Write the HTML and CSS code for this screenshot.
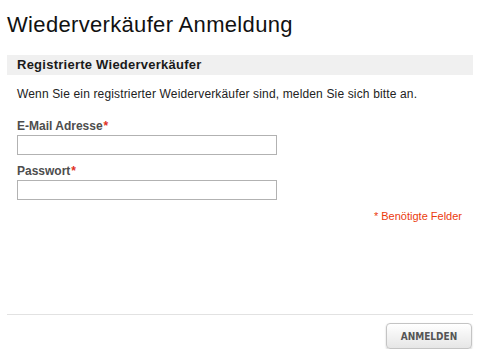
FILE: index.html
```html
<!DOCTYPE html>
<html lang="de">
<head>
  <meta charset="UTF-8">
  <title>Wiederverkäufer Anmeldung</title>
  <link rel="stylesheet" href="styles.css">
</head>
<body>
  <div class="page">
    <h1>Wiederverkäufer Anmeldung</h1>

    <form class="login-form">
      <h2 class="section-title">Registrierte Wiederverkäufer</h2>
      <div class="section-body">
        <p class="intro">Wenn Sie ein registrierter Weiderverkäufer sind, melden Sie sich bitte an.</p>

        <label for="email">E-Mail Adresse<em>*</em></label>
        <input type="text" id="email" name="email">

        <label for="pass">Passwort<em>*</em></label>
        <input type="password" id="pass" name="pass">

        <p class="required">* Benötigte Felder</p>
      </div>

      <div class="buttons">
        <button type="submit">ANMELDEN</button>
      </div>
    </form>
  </div>
</body>
</html>
```

FILE: styles.css
```css
body {
  margin: 0;
  font-family: "Liberation Sans", Arial, sans-serif;
  background: #fff;
  color: #222;
}

.page {
  width: 466px;
  margin-left: 7px;
}

h1 {
  margin: 0;
  padding-top: 12px;
  font-size: 22px;
  line-height: 26px;
  font-weight: normal;
  letter-spacing: 0.33px;
  color: #111;
}

.section-title {
  margin: 17px 0 0;
  height: 20px;
  padding-left: 10px;
  background-color: #f0f0f0;
  font-size: 13px;
  line-height: 20px;
  font-weight: bold;
  letter-spacing: 0.25px;
  color: #1a1a1a;
}

.section-body {
  padding: 0 11px 0 10px;
}

.intro {
  margin: 12px 0 0;
  font-size: 12px;
  line-height: 15px;
  letter-spacing: 0.15px;
  color: #222;
}

label {
  display: block;
  margin-top: 17px;
  font-size: 12px;
  line-height: 15px;
  font-weight: bold;
  color: #4d4d4d;
}

label + input + label {
  margin-top: 9px;
}

label em {
  font-style: normal;
  color: #e0301e;
  margin-left: 1px;
}

input[type="text"],
input[type="password"] {
  display: block;
  width: 260px;
  height: 20px;
  margin: 1px 0 0;
  padding: 2px 4px;
  border: 1px solid #b2b2b2;
  box-sizing: border-box;
  font-size: 12px;
}

.required {
  margin: 9px 0 0;
  text-align: right;
  font-size: 11px;
  line-height: 14px;
  color: #eb3a0c;
}

.buttons {
  margin-top: 91px;
  border-top: 1px solid #e2e2e2;
  padding-top: 8px;
  display: flex;
  justify-content: flex-end;
  padding-right: 1px;
}

button {
  width: 86px;
  height: 26px;
  border: 1px solid #c4c4c4;
  border-radius: 4px;
  background: linear-gradient(#ffffff, #e6e6e6);
  box-shadow: 0 1px 2px rgba(0, 0, 0, 0.2);
  font-family: "DejaVu Sans Condensed", "DejaVu Sans", sans-serif;
  font-size: 10px;
  font-weight: bold;
  color: #555;
  cursor: pointer;
  padding: 0;
}
```
